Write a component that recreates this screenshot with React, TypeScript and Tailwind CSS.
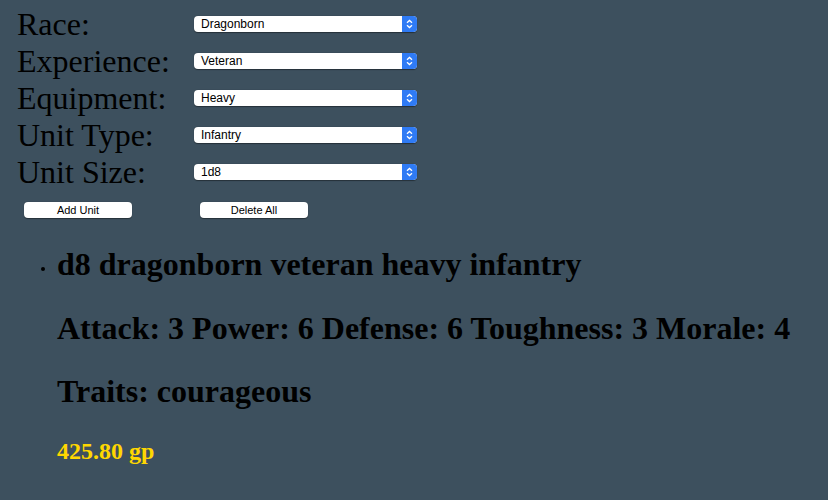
import React from "react";

const rows: [string, string][] = [
  ["Race:", "Dragonborn"],
  ["Experience:", "Veteran"],
  ["Equipment:", "Heavy"],
  ["Unit Type:", "Infantry"],
  ["Unit Size:", "1d8"],
];

function Sel({ value }: { value: string }) {
  return (
    <div className="flex h-[16px] w-[223px] items-stretch rounded-[4px] bg-white shadow-[0_0.5px_1px_rgba(0,0,0,0.4)]">
      <div className="flex flex-1 items-center pl-[7px] text-[12px] text-black [font-family:'Liberation_Sans',Arial,sans-serif]">
        {value}
      </div>
      <div className="flex w-[15px] items-center justify-center rounded-r-[4px] bg-[#2f7bf5]">
        <svg width="7" height="10" viewBox="0 0 7 10" fill="none" stroke="white" strokeWidth="1.3">
          <path d="M1 3.8 L3.5 1.5 L6 3.8" />
          <path d="M1 6.2 L3.5 8.5 L6 6.2" />
        </svg>
      </div>
    </div>
  );
}

export default function App() {
  return (
    <div className="min-h-[500px] w-full bg-[#3d505e] [font-family:'Liberation_Serif','Times_New_Roman',serif] text-black">
      <div className="pl-[17px] pt-[5px]">
        {rows.map(([l, v]) => (
          <div key={l} className="flex h-[37px] items-center">
            <div className="w-[177px] text-[32px] leading-none">{l}</div>
            <Sel value={v} />
          </div>
        ))}
      </div>
      <div className="mt-[12px] flex pl-[24px] [font-family:'Liberation_Sans',Arial,sans-serif]">
        <button className="h-[16px] w-[108px] rounded-[4px] bg-white text-[11px] leading-none text-black shadow-[0_0.5px_1px_rgba(0,0,0,0.4)]">
          Add Unit
        </button>
        <button className="ml-[68px] h-[16px] w-[108px] rounded-[4px] bg-white text-[11px] leading-none text-black shadow-[0_0.5px_1px_rgba(0,0,0,0.4)]">
          Delete All
        </button>
      </div>
      <ul className="mt-[28px] pl-[57px]">
        <li className="relative">
          <span className="absolute left-[-16px] top-[21px] h-[4px] w-[4px] rounded-full bg-black" />
          <div className="text-[32px] font-bold leading-[36px]">d8 dragonborn veteran heavy infantry</div>
          <div className="mt-[28px] text-[32px] font-bold leading-[36px]">
            Attack: 3 Power: 6 Defense: 6 Toughness: 3 Morale: 4
          </div>
          <div className="mt-[27px] text-[32px] font-bold leading-[36px]">Traits: courageous</div>
          <div className="mt-[28px] text-[24px] font-bold leading-[28px] text-[#ffd700]">425.80 gp</div>
        </li>
      </ul>
    </div>
  );
}
